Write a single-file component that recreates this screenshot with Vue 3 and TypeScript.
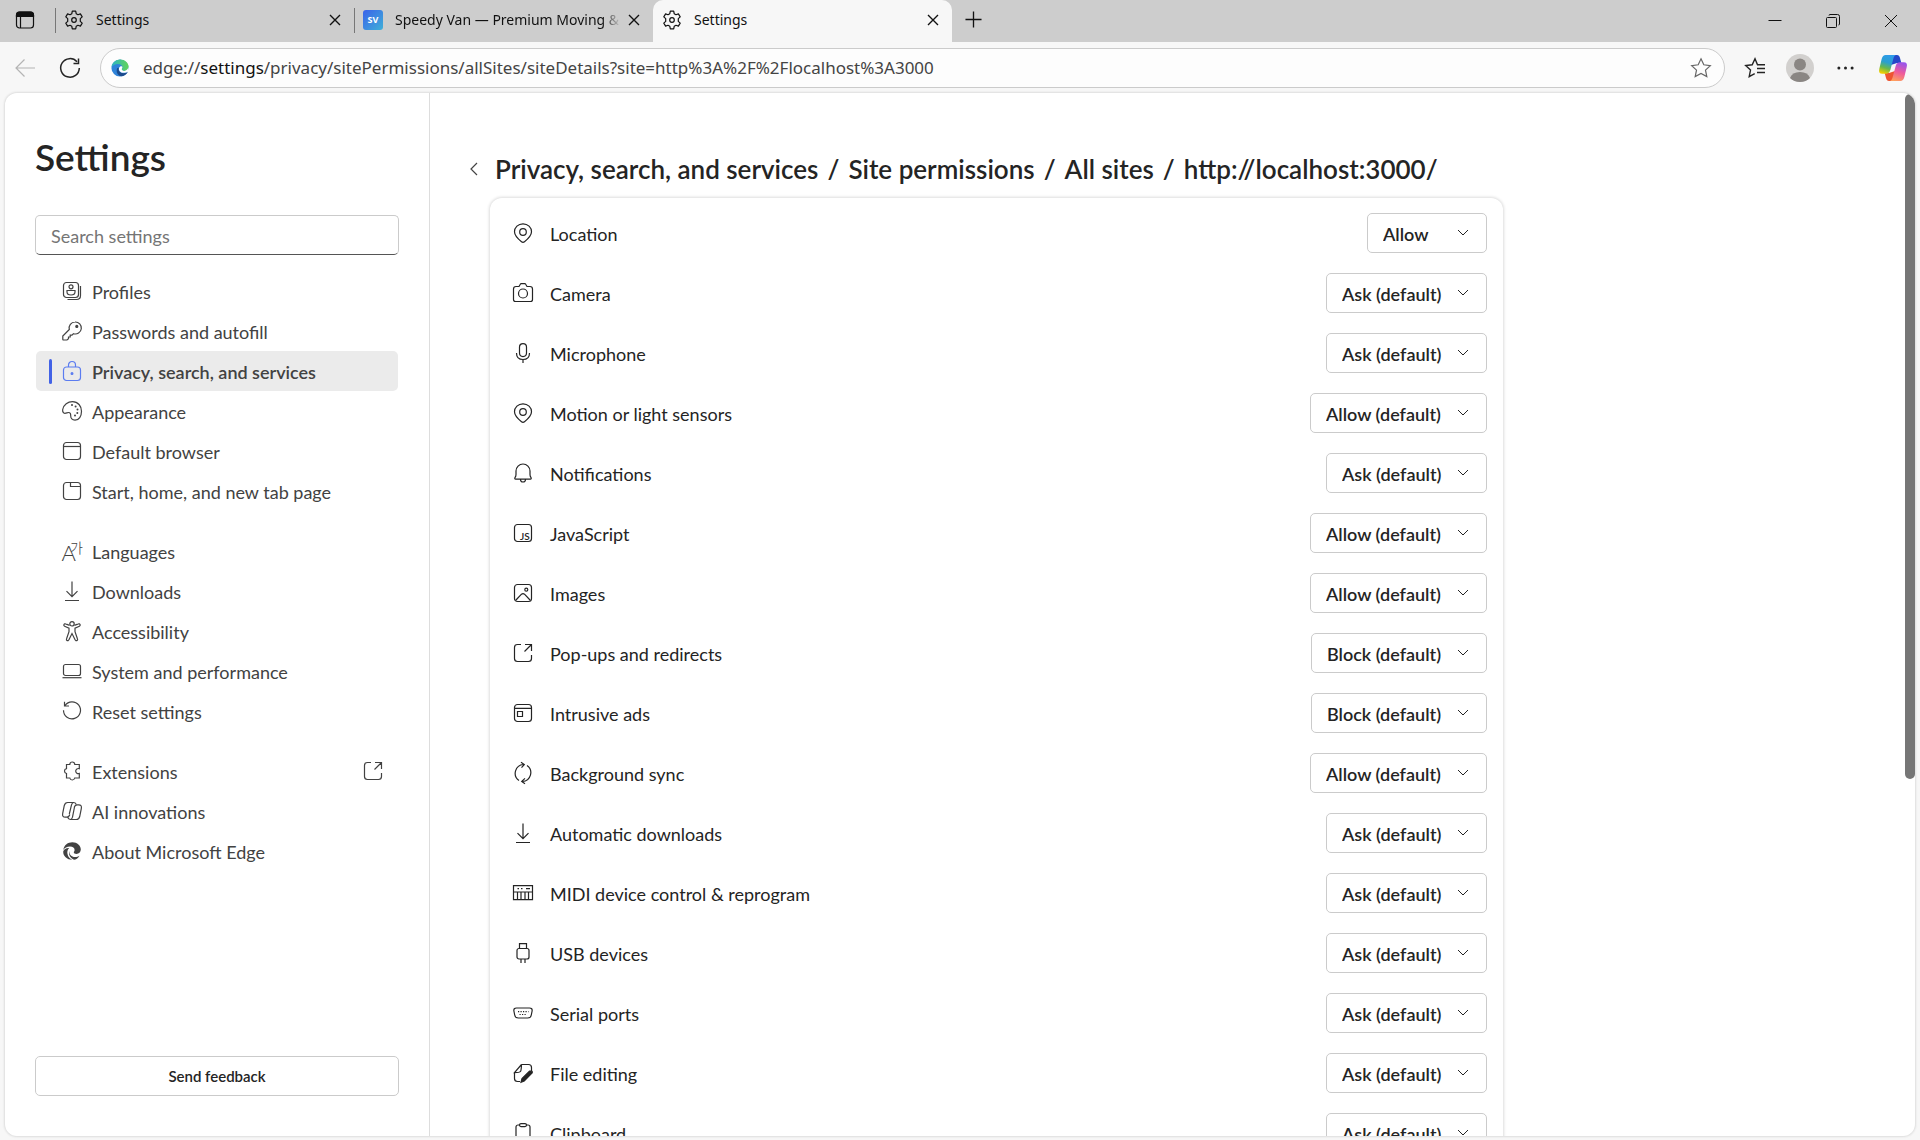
<script setup lang="ts">
import { ref } from 'vue'

interface NavItem {
  label: string
  icon: string
  external?: boolean
}

interface Permission {
  label: string
  icon: string
  value: string
}

/* Icon artwork on a 20 x 20 grid, stroked with the current text colour. */
const icons: Record<string, string> = {
  gear: '<path d="M8.3 1.2h3.4l.5 2.5 1.8 1 2.4-.8 1.8 3-1.9 1.7v2.8l1.9 1.7-1.8 3-2.4-.8-1.8 1-.5 2.5H8.3l-.5-2.5-1.8-1-2.4.8-1.8-3 1.9-1.7V8.6L1.800 6.900l1.800-3 2.400.8 1.800-1z" stroke-linejoin="round"/><circle cx="10" cy="10" r="2.300"/>',
  profiles: '<rect x="1.500" y="1.500" width="15" height="15" rx="3"/><circle cx="9" cy="5.800" r="2"/><path d="M5 9.500h8v1.500q0 3-4 3t-4-3z"/><path d="M18.500 5v9.500q0 4-4 4H5.500"/>',
  key: '<path d="M13 1a6 6 0 1 1-1.500 11.700L10 14.200H8.200V16H6.500v1.800L5 19H1.500q-.7 0-.7-.7V15l6.500-6.500A6 6 0 0 1 13 1z"/><circle cx="14.800" cy="5.400" r="1" fill="currentColor"/>',
  lock: '<rect x="1.500" y="6" width="17" height="13.500" rx="3"/><path d="M6.500 6V4a3.500 3.500 0 0 1 7 0v2"/><circle cx="10" cy="12.600" r=".9" fill="currentColor"/>',
  palette: '<path d="M.7 8.500C1.500 3.500 6 .6 10.500.6c5.500 0 9 4.500 9 9.600 0 5-2.500 9-6.500 9-2.800 0-4.300-2-4.300-4.400 0-1.700-.2-3.300-2.200-3.300-1.300 0-2 .8-3.600.8C1.200 12.300.4 10.500.7 8.500z"/><g fill="currentColor" stroke="none"><circle cx="10" cy="4" r="1"/><circle cx="13.600" cy="5.500" r="1"/><circle cx="15.500" cy="8.600" r="1"/><circle cx="15.300" cy="12" r="1"/><circle cx="13" cy="14.500" r="1"/></g>',
  window: '<rect x="1.500" y="1.500" width="17" height="17" rx="3"/><path d="M1.500 5.500h17"/>',
  tabpage: '<rect x="1.500" y="1.500" width="17" height="17" rx="3"/><path d="M8.500 1.500v4h10"/>',
  language: '<text x="-.5" y="20" fill="currentColor" stroke="none" font-size="22" font-weight="300" font-family="Lato, Noto Sans CJK KR, sans-serif">A<tspan x="8" y="12" font-size="14">가</tspan></text>',
  download: '<path d="M10 .5v15M4.500 10.200l5.500 5.500 5.500-5.500M3 19.500h14"/>',
  access: '<circle cx="10" cy="2.800" r="2.200"/><path d="M7.600 4.400 3.600 2.900a1.200 1.200 0 0 0-1 2.300L7 7.200v3.500L4.500 18a1.200 1.200 0 0 0 2.300.9L10 12.500l3.200 6.400a1.200 1.200 0 0 0 2.300-.9L13 10.700V7.200l4.400-2a1.200 1.200 0 0 0-1-2.300l-4 1.500"/>',
  laptop: '<rect x="1.500" y="3.500" width="17" height="11" rx="2"/><path d="M.5 16.700h19"/>',
  reset: '<path d="M3 4.500a8.500 8.500 0 1 1-1.500 4.800M2.500.8v4.200H7"/>',
  puzzle: '<path d="M4.500 3.500h3.300a2.500 2.500 0 0 1 5 0h4.500v4.200a2.600 2.600 0 1 0 0 4.800v4.500h-4.600a2.500 2.500 0 0 1-4.900 0H4.500v-4.500a2.500 2.500 0 0 1 0-4.900z"/>',
  copilot: '<path d="M5.700 1.500h6.100q2 0 2.500 2.200M7.800 13.500q-.8 2.700-3 2.700H3.300Q-.1 16.200.7 12.300L2.300 4.500q.7-3 3.400-3M11.800 1.500q-1.700 0-2.300 2.300L7.300 13"/><path d="M14.300 18.500H8.200q-2 0-2.500-2.300M12.200 6.500q.8-2.700 3-2.700h1.500q3.400 0 2.600 3.900l-1.600 7.800q-.7 3-3.400 3M8.200 18.500q1.700 0 2.300-2.300L12.700 5"/>',
  edgemono: '<g stroke="none" fill="currentColor"><path d="M1.300 9C2 4 6 1.300 10.300 1.300c5 0 8.500 3.600 8.500 7.200 0 2.700-2 4.400-4.300 4.400-1.600 0-2.700-.8-2.700-1.700 0-.6.800-1 .8-2.300C12.600 7 10.900 5.600 8 5.600 5 5.600 2.500 7 1.300 9z"/><path d="M1.200 10.500C2 8 4.500 6.700 7.200 7 5.500 8.500 5 10.500 5.500 13c.5 2.700 2.200 4.800 4.800 5.800C4.900 18.800 1 15 1.200 10.500z"/><path d="M7.500 10c-.5 3.500 2 6 5.500 6 1.700 0 3.300-.5 4.500-1.300-1.500 2.700-3.500 3.900-5.500 4C8.500 17.500 6 13.500 7.500 10z"/></g>',
  external: '<path d="M8 1.500H4.500q-3 0-3 3v11q0 3 3 3h11q3 0 3-3V12M12 1.500h6.500V8M18.500 1.500l-7 7"/>',
  pin: '<path d="M10 .8c4.900 0 8.500 3.600 8.500 8 0 3.500-2.500 6.300-7 10q-1.500 1.200-3 0c-4.500-3.700-7-6.500-7-10 0-4.400 3.600-8 8.500-8z"/><circle cx="10" cy="9" r="3.300"/>',
  camera: '<path d="M6 3.500 7.300 1.200Q7.600.6 8.300.6h3.400q.7 0 1 .6L14 3.500h3q2.500 0 2.500 2.500v10.500q0 2-2 2h-15q-2 0-2-2V6Q.5 3.500 3 3.500z"/><circle cx="10" cy="10.500" r="4.500"/>',
  mic: '<rect x="6.500" y=".6" width="7" height="13" rx="3.500"/><path d="M3.500 10q0 6.500 6.500 6.500T16.500 10M10 16.500v3.500"/>',
  bell: '<path d="M2 14.500q1-1 1-3V8a7 7 0 0 1 14 0v3.500q0 2 1 3 .6 1.700-.6 1.700H2.600Q1.400 16.200 2 14.500zM7.500 16.500a2.500 2.500 0 0 0 5 0"/>',
  js: '<rect x="1.500" y="1.500" width="17" height="17" rx="3"/><text x="7" y="16.500" font-size="10" font-weight="600" font-family="Lato, sans-serif" fill="currentColor" stroke="none">JS</text>',
  image: '<rect x="1.500" y="1.500" width="17" height="17" rx="3"/><circle cx="13.300" cy="6.700" r="1.500"/><path d="m3 17 5.500-5.800q1.500-1.300 3 0L17 17"/>',
  ads: '<rect x="1.500" y="1.500" width="17" height="17" rx="3"/><path d="M1.500 5.300h17M4.500 8.500h5v5h-5z"/>',
  sync: '<path d="M6 17.500A8.800 8.800 0 0 1 10.500 1.500M14 2.500A8.800 8.800 0 0 1 9.500 18.500M8-.8l3.300 2.400L8.500 4.600M12 15.400l-3.300 3 3.300 2.400"/>',
  midi: '<path d="M.5 2.700h19v14H.5zM.5 9h19M4.500 9v7.500M8 9v7.500M12 9v7.500M15.500 9v7.500M4.500 5.700H6M8 5.700h1.500M13 5.700h4"/>',
  usb: '<rect x="4" y="5.500" width="12" height="10.500" rx="2"/><path d="M6.500 5.500V.6h7v4.900M8 16v4M12 16v4"/>',
  serial: '<path d="M3.500 5h13q3 0 2.600 3l-.8 4q-.5 3-3.500 3H5.200q-3 0-3.500-3L.9 8q-.4-3 2.600-3z"/><path stroke-dasharray="1.200 1.300" d="M5 8.700h10.500M6.500 11.500h7.500"/>',
  fileedit: '<path d="M8.500 1.500h7q3 0 3 3V8M1.500 9.500v6q0 3 3 3H7M8.500 1.500q-.2 6-1 7t-6 1.200L8.500 1.500"/><path d="m19.200 9.800-8 8.200-3.200 1.300 1-3.700 7.600-7.500q3.400-.5 2.600 1.700z" fill="currentColor"/>',
  clipboard: '<rect x="3" y="2" width="14" height="18" rx="2"/><rect x="6.500" y=".6" width="7" height="3" rx="1.500" fill="#fff"/>',
}

const groups: NavItem[][] = [
  [
    { label: 'Profiles', icon: 'profiles' },
    { label: 'Passwords and autofill', icon: 'key' },
    { label: 'Privacy, search, and services', icon: 'lock' },
    { label: 'Appearance', icon: 'palette' },
    { label: 'Default browser', icon: 'window' },
    { label: 'Start, home, and new tab page', icon: 'tabpage' },
  ],
  [
    { label: 'Languages', icon: 'language' },
    { label: 'Downloads', icon: 'download' },
    { label: 'Accessibility', icon: 'access' },
    { label: 'System and performance', icon: 'laptop' },
    { label: 'Reset settings', icon: 'reset' },
  ],
  [
    { label: 'Extensions', icon: 'puzzle', external: true },
    { label: 'AI innovations', icon: 'copilot' },
    { label: 'About Microsoft Edge', icon: 'edgemono' },
  ],
]

const current = ref('Privacy, search, and services')
const search = ref('')
const crumbs = ['Privacy, search, and services', 'Site permissions', 'All sites']

const ask = 'Ask (default)'
const allow = 'Allow (default)'
const block = 'Block (default)'

const permissions = ref<Permission[]>([
  { label: 'Location', icon: 'pin', value: 'Allow' },
  { label: 'Camera', icon: 'camera', value: ask },
  { label: 'Microphone', icon: 'mic', value: ask },
  { label: 'Motion or light sensors', icon: 'pin', value: allow },
  { label: 'Notifications', icon: 'bell', value: ask },
  { label: 'JavaScript', icon: 'js', value: allow },
  { label: 'Images', icon: 'image', value: allow },
  { label: 'Pop-ups and redirects', icon: 'external', value: block },
  { label: 'Intrusive ads', icon: 'ads', value: block },
  { label: 'Background sync', icon: 'sync', value: allow },
  { label: 'Automatic downloads', icon: 'download', value: ask },
  { label: 'MIDI device control & reprogram', icon: 'midi', value: ask },
  { label: 'USB devices', icon: 'usb', value: ask },
  { label: 'Serial ports', icon: 'serial', value: ask },
  { label: 'File editing', icon: 'fileedit', value: ask },
  { label: 'Clipboard', icon: 'clipboard', value: ask },
])
</script>

<template>
  <div class="browser">
    <header class="tabstrip">
      <button class="tab-actions" aria-label="Tab actions">
        <svg class="icon" viewBox="0 0 20 20"><rect x="1.500" y="2" width="17" height="16" rx="3" /><path d="M1.500 5q0-3 3-3h11q3 0 3 3v1.500h-17z" fill="currentColor" /><path d="M5.500 6v12" /></svg>
      </button>
      <div class="tab">
        <svg class="icon" viewBox="0 0 20 20" v-html="icons.gear" />
        <span class="tab-title">Settings</span>
        <button class="close" aria-label="Close tab"><svg viewBox="0 0 12 12"><path d="m1 1 10 10M11 1 1 11" /></svg></button>
      </div>
      <div class="tab">
        <svg class="favicon" viewBox="0 0 20 20">
          <defs><linearGradient id="sv" x1="0" y1="0" x2="1" y2="1"><stop offset="0" stop-color="#3b62ea" /><stop offset="1" stop-color="#3fb0d8" /></linearGradient></defs>
          <rect width="20" height="20" rx="3" fill="url(#sv)" />
          <text x="10" y="13" text-anchor="middle" font-size="9" font-weight="700" fill="#fff">SV</text>
        </svg>
        <span class="tab-title faded">Speedy Van — Premium Moving &amp;</span>
        <button class="close" aria-label="Close tab"><svg viewBox="0 0 12 12"><path d="m1 1 10 10M11 1 1 11" /></svg></button>
      </div>
      <div class="tab active">
        <svg class="icon" viewBox="0 0 20 20" v-html="icons.gear" />
        <span class="tab-title">Settings</span>
        <button class="close" aria-label="Close tab"><svg viewBox="0 0 12 12"><path d="m1 1 10 10M11 1 1 11" /></svg></button>
      </div>
      <button class="new-tab" aria-label="New tab"><svg viewBox="0 0 18 18"><path d="M9 .5v17M.5 9h17" /></svg></button>
      <div class="window-controls">
        <button aria-label="Minimize"><svg viewBox="0 0 14 14"><path d="M.5 6.500h13" /></svg></button>
        <button aria-label="Restore"><svg viewBox="0 0 14 14"><rect x=".5" y="3.500" width="10" height="10" rx="1" /><path d="M3 1.500q0-1 1-1h7.500q2 0 2 2V10q0 1-1 1" /></svg></button>
        <button aria-label="Close"><svg viewBox="0 0 14 14"><path d="m1 1 12 12M13 1 1 13" /></svg></button>
      </div>
    </header>

    <div class="toolbar">
      <button class="back" aria-label="Back" disabled><svg class="icon" viewBox="0 0 20 20"><path d="M20 10H1M9.500 1.500 1 10l8.500 8.500" /></svg></button>
      <button aria-label="Refresh"><svg class="icon" viewBox="0 0 20 20"><path d="M19.300 10A9.300 9.300 0 1 1 17 3.800M18.500.5v5h-5" stroke-width="1.500" /></svg></button>
      <div class="address">
        <svg class="edge" viewBox="0 0 20 20">
          <defs>
            <linearGradient id="eg" x1="0" y1="0" x2="1" y2="0"><stop offset="0" stop-color="#2cb5c5" /><stop offset="1" stop-color="#63d457" /></linearGradient>
          </defs>
          <circle cx="10" cy="10" r="9.500" fill="#2f83d8" />
          <path d="M.5 9C1.500 3.500 5.800.5 10.200.5c5.300 0 9.300 3.700 9.300 8 0 3-2.200 4.700-4.800 4.700-1.700 0-2.700-.8-2.700-1.700 0-.7.800-1 .8-2.300C12.800 7 10.500 5.500 7.700 5.500 4.500 5.500 1.700 7 .5 9z" fill="url(#eg)" />
          <path d="M7 10c-2 4 .5 9 5 9.300 3-.5 5.500-2.300 6.700-4.800-3.500 2.200-9 1.500-10-2-.3-1 0-2 .5-2.700z" fill="#1b4a8c" />
          <path d="M10 8.500c-1.500 1-1.700 3-.5 4.700 1.800 2.700 6.500 2.800 10 .3V9c-.6 2.700-2.600 4.200-4.800 4.200-1.700 0-2.700-.8-2.700-1.700 0-1 .6-1.500.7-2.300.1-.9-1.500-1.500-2.700-.7z" fill="#fff" />
        </svg>
        <p class="url">edge://<b>settings</b>/privacy/sitePermissions/allSites/siteDetails?site=http%3A%2F%2Flocalhost%3A3000</p>
        <button class="star" aria-label="Add to favorites"><svg class="icon" viewBox="0 0 20 20"><path d="m10 .8 2.800 6 6.500.8-4.800 4.500 1.300 6.500-5.800-3.200-5.800 3.200 1.300-6.500L.7 7.600l6.500-.8z" /></svg></button>
      </div>
      <button class="favorites" aria-label="Favorites"><svg class="icon" viewBox="0 0 20 20"><path d="M15.500 6.800h-3L10 .8l-2.800 6-6.500.8 4.800 4.500-1.300 6.500 5.500-3M12 10.500h8M12 14.500h8M14 6.800h6" stroke-width="1.400" /></svg></button>
      <button class="avatar" aria-label="Profile">
        <svg viewBox="0 0 28 28"><circle cx="14" cy="14" r="14" fill="#d2d0ce" /><circle cx="14" cy="10.500" r="6" fill="#8a8683" /><path d="M4 24q2-6 10-6t10 6q-4 4-10 4T4 24z" fill="#8a8683" /></svg>
      </button>
      <button class="more" aria-label="Settings and more"><svg viewBox="0 0 18 4"><circle cx="2" cy="2" r="1.600" /><circle cx="9" cy="2" r="1.600" /><circle cx="16" cy="2" r="1.600" /></svg></button>
      <button class="copilot" aria-label="Copilot">
        <svg viewBox="0 0 84 78">
          <defs>
            <linearGradient id="ca" x1=".6" y1="0" x2=".3" y2="1"><stop offset="0" stop-color="#2f9bea" /><stop offset=".4" stop-color="#2a9fd0" /><stop offset=".7" stop-color="#68b84c" /><stop offset="1" stop-color="#f2d000" /></linearGradient>
            <linearGradient id="cb" x1=".6" y1="0" x2=".3" y2="1"><stop offset="0" stop-color="#9a55ea" /><stop offset=".5" stop-color="#ee5a9c" /><stop offset="1" stop-color="#ffa05c" /></linearGradient>
          </defs>
          <path d="M40 0h14q7 0 9 9l4 15H54L36 30z" fill="#2548c8" />
          <path d="M44 78H30q-7 0-9-9l-4-15h13l18-6z" fill="#ee5532" />
          <path d="M20 0h32q-6 0-9 11l-9 34q-3 11-13 11H10Q-3 56 1 41l7-29Q11 0 20 0z" fill="url(#ca)" />
          <path d="M64 78H32q6 0 9-11l9-34q3-11 13-11h11q13 0 9 15l-7 29q-3 12-12 12z" fill="url(#cb)" />
        </svg>
      </button>
    </div>

    <div class="page">
      <aside class="sidebar">
        <h1>Settings</h1>
        <input v-model="search" class="search" type="search" placeholder="Search settings" aria-label="Search settings" />
        <nav>
          <ul v-for="(group, g) in groups" :key="g">
            <li v-for="item in group" :key="item.label">
              <a href="#" :class="{ current: item.label === current }" @click.prevent="current = item.label">
                <svg class="icon" viewBox="0 0 20 20" v-html="icons[item.icon]" />
                <span>{{ item.label }}</span>
                <svg v-if="item.external" class="icon trailing" viewBox="0 0 20 20" v-html="icons.external" />
              </a>
            </li>
          </ul>
        </nav>
        <button class="feedback">Send feedback</button>
      </aside>

      <main>
        <div class="crumbs">
          <button aria-label="Go back"><svg viewBox="0 0 8 14"><path d="M7 1 1 7l6 6" /></svg></button>
          <h2>
            <template v-for="crumb in crumbs" :key="crumb"><a href="#">{{ crumb }}</a><span class="slash">/</span></template>
            <span>http://localhost:3000/</span>
          </h2>
        </div>
        <section class="card">
          <div v-for="(p, i) in permissions" :key="p.label" class="row">
            <svg class="icon" viewBox="0 0 20 20" v-html="icons[p.icon]" />
            <label :for="`perm-${i}`">{{ p.label }}</label>
            <span class="picker">
              <select :id="`perm-${i}`" v-model="p.value">
                <option>{{ p.value }}</option>
              </select>
              <svg viewBox="0 0 12 8"><path d="m1 1 5 5 5-5" /></svg>
            </span>
          </div>
        </section>
      </main>
      <div class="scroll-thumb"></div>
    </div>
  </div>
</template>

<style>
html,
body,
#app {
  height: 100%;
}
body {
  margin: 0;
  overflow: hidden;
}
</style>

<style scoped>
.browser {
  display: flex;
  flex-direction: column;
  height: 100vh;
  background: #f7f7f7;
  color: #242424;
  font-family: Lato, "Open Sans", sans-serif;
  font-size: 18px;
  line-height: 24px;
}
.browser * {
  box-sizing: border-box;
}
button {
  display: flex;
  align-items: center;
  justify-content: center;
  padding: 0;
  border: 0;
  background: none;
  color: inherit;
  font: inherit;
}
a {
  color: inherit;
  text-decoration: none;
}
svg {
  flex: none;
  overflow: visible;
  fill: none;
  stroke: currentColor;
}
.icon {
  width: 20px;
  height: 20px;
  stroke-width: 1.2;
}

/* Tab strip */
.tabstrip {
  display: flex;
  flex: none;
  height: 42px;
  background: #cdcdcd;
  color: #111;
  font-family: "Noto Sans", "Open Sans", sans-serif;
  font-size: 14px;
}
.tab-actions {
  width: 55px;
  height: 40px;
  padding-right: 5px;
}
.tab {
  display: flex;
  align-items: center;
  flex: 0 0 299px;
  min-width: 0;
  height: 40px;
  padding: 0 12px 0 9px;
  background: linear-gradient(#777, #777) left center / 1px 25px no-repeat;
}
.tab.active {
  height: 42px;
  padding-bottom: 2px;
  border-radius: 10px 10px 0 0;
  background: #f7f7f7;
}
.tab-title {
  flex: 1;
  margin: 0 4px 0 12px;
  overflow: hidden;
  white-space: nowrap;
}
.faded {
  -webkit-mask-image: linear-gradient(90deg, #000 91%, transparent 99%);
  mask-image: linear-gradient(90deg, #000 91%, transparent 99%);
}
.favicon {
  width: 20px;
  height: 20px;
  stroke: none;
}
.close {
  width: 14px;
}
.close svg {
  width: 12px;
  height: 12px;
  stroke-width: 1.4;
}
.new-tab {
  width: 42px;
  height: 38px;
}
.new-tab svg {
  width: 17px;
  height: 17px;
  stroke-width: 1.4;
}
.window-controls {
  display: flex;
  margin-left: auto;
}
.window-controls button {
  width: 58px;
}
.window-controls svg {
  width: 14px;
  height: 14px;
}

/* Toolbar */
.toolbar {
  display: flex;
  align-items: center;
  flex: none;
  height: 51px;
  padding: 0 13px 0 15px;
}
.toolbar .back {
  margin-right: 25px;
  color: #b4b4b4;
}
.address {
  display: flex;
  align-items: center;
  flex: 1;
  height: 40px;
  margin: 0 20px;
  padding: 0 13px 0 10px;
  border: 1px solid #cbcbcb;
  border-radius: 20px;
  background: #fdfdfd;
}
.edge {
  width: 18px;
  height: 18px;
  stroke: none;
}
.url {
  flex: 1;
  margin: 0 14px;
  color: #444;
  font-family: "Noto Sans", "Open Sans", sans-serif;
  font-size: 17px;
  white-space: nowrap;
}
.url b {
  color: #111;
  font-weight: 400;
}
.star {
  color: #666;
}
.avatar {
  margin: 0 23px 0 21px;
}
.avatar svg {
  width: 28px;
  height: 28px;
  stroke: none;
}
.more svg {
  width: 17px;
  height: 4px;
  fill: currentColor;
  stroke: none;
}
.copilot {
  margin-left: 25px;
}
.copilot svg {
  width: 28px;
  height: 26px;
  stroke: none;
}

/* Page */
.page {
  position: relative;
  display: flex;
  flex: 1;
  min-height: 0;
  margin: 0 5px 4px;
  overflow: hidden;
  border-radius: 12px;
  background: #fff;
  box-shadow: 0 0 2px 1px #ddd;
}
.sidebar {
  display: flex;
  flex-direction: column;
  flex: 0 0 425px;
  padding: 44px 30px 40px;
  border-right: 1px solid #ddd;
}
h1 {
  margin: 0 0 38px;
  font-size: 37px;
  font-weight: 600;
  line-height: 40px;
}
.search {
  flex: none;
  width: 100%;
  height: 40px;
  margin-bottom: 16px;
  padding: 2px 15px 0;
  border: 1px solid #cbcbcb;
  border-bottom-color: #555;
  border-radius: 5px;
  background: #fff;
  font: inherit;
  outline: 0;
  appearance: none;
}
.search::placeholder {
  color: #757575;
}
nav {
  flex: 1;
  color: #424242;
}
ul {
  margin: 0 0 20px;
  padding: 0;
  list-style: none;
}
nav a {
  display: flex;
  align-items: center;
  gap: 10px;
  height: 40px;
  margin: 0 1px;
  padding: 0 15px 0 26px;
  border-radius: 5px;
}
nav a span {
  flex: 1;
  padding-top: 2px;
}
nav a.current {
  padding-left: 10px;
  background: #ebebeb;
  font-weight: 600;
}
nav a.current::before {
  width: 3px;
  height: 25px;
  margin-left: 3px;
  border-radius: 2px;
  background: #4262e6;
  content: "";
}
nav a.current .icon {
  color: #5b7cf0;
}
.feedback {
  flex: none;
  height: 40px;
  border: 1px solid #cbcbcb;
  border-radius: 5px;
  background: #fff;
  font-size: 15px;
  font-weight: 600;
}

/* Site permissions */
main {
  flex: 1;
  min-width: 0;
  padding: 59px 40px 0 40px;
  overflow: hidden;
}
.crumbs {
  display: flex;
  align-items: center;
  gap: 17px;
  height: 34px;
}
.crumbs svg {
  width: 8px;
  height: 14px;
  color: #444;
  stroke-width: 1.2;
}
h2 {
  margin: 0;
  font-size: 26px;
  font-weight: 600;
  line-height: 34px;
  white-space: nowrap;
}
.slash {
  margin: 0 9px;
}
.card {
  max-width: 1013px;
  margin: 12px 0 40px 20px;
  padding: 5px 16px 5px 23px;
  border-radius: 12px;
  background: #fff;
  box-shadow: 0 0 3px 1px #ddd;
}
.row {
  display: flex;
  align-items: center;
  height: 60px;
}
.row label {
  flex: 1;
  margin-left: 17px;
  padding-top: 2px;
}
.picker {
  display: grid;
  align-items: center;
}
.picker > * {
  grid-area: 1 / 1;
}
.picker svg {
  justify-self: end;
  width: 12px;
  height: 8px;
  margin-right: 18px;
  pointer-events: none;
}
select {
  min-width: 120px;
  height: 40px;
  padding: 2px 44px 0 15px;
  border: 1px solid #cbcbcb;
  border-radius: 5px;
  background: #fff;
  color: inherit;
  font: inherit;
  font-weight: 600;
  appearance: none;
}
.scroll-thumb {
  position: absolute;
  top: 1px;
  right: 0;
  width: 10px;
  height: 65.7%;
  border-radius: 5px;
  background: #767676;
}
</style>
